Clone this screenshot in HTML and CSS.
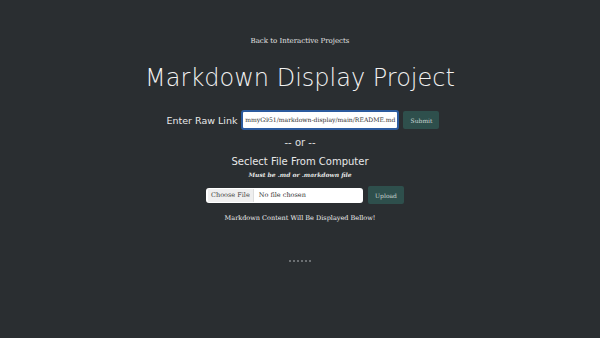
FILE: index.html
```html
<!DOCTYPE html>
<html lang="en">
<head>
<meta charset="utf-8">
<title>Markdown Display Project</title>
<link rel="stylesheet" href="styles.css">
</head>
<body>
<main class="page">
  <a class="back" href="#">Back to Interactive Projects</a>
  <h1 class="title">Markdown Display Project</h1>
  <form class="link-row">
    <label class="link-label" for="raw">Enter Raw Link</label>
    <div class="link-input"><span class="link-text">mmyG951/markdown-display/main/README.md</span></div>
    <button class="btn" type="button">Submit</button>
  </form>
  <p class="or">-- or --</p>
  <p class="select">Seclect File From Computer</p>
  <p class="hint">Must be .md or .markdown file</p>
  <div class="file-row">
    <div class="file-input"><span class="choose">Choose File</span><span class="none">No file chosen</span></div>
    <button class="btn btn-upload" type="button">Upload</button>
  </div>
  <p class="note">Markdown Content Will Be Displayed Bellow!</p>
  <div class="dots"><span></span><span></span><span></span><span></span><span></span><span></span></div>
</main>
</body>
</html>
```
FILE: styles.css
```css
html, body {
  margin: 0;
  padding: 0;
  background: #2a2e31;
  height: 100%;
}
.page {
  display: flex;
  flex-direction: column;
  align-items: center;
  padding-top: 36px;
  font-family: "DejaVu Serif", serif;
  color: #e6e6e6;
}
.back {
  color: #e4e4e4;
  text-decoration: none;
  font-size: 7px;
  line-height: 10px;
}
.title {
  margin: 16px 0 0;
  font-family: "DejaVu Sans", sans-serif;
  font-weight: 300;
  font-size: 24px;
  line-height: 32px;
  color: #f2f2f2;
  letter-spacing: 0;
}
.link-row {
  display: flex;
  align-items: center;
  margin: 16px 0 0 6px;
  gap: 4px;
}
.link-label {
  font-family: "DejaVu Sans", sans-serif;
  font-size: 9.5px;
  color: #e8e8e8;
}
.link-input {
  box-sizing: border-box;
  width: 158px;
  height: 20px;
  border: 2px solid #2b5a9e;
  border-radius: 3px;
  background: #fff;
  color: #333;
  font-size: 6.1px;
  line-height: 16px;
  padding: 0 2px;
  display: flex;
  justify-content: flex-end;
  overflow: hidden;
  white-space: nowrap;
}
.link-text {
  flex-shrink: 0;
}
.btn {
  box-sizing: border-box;
  height: 18px;
  width: 36px;
  border: none;
  border-radius: 2px;
  background: #2e4f4c;
  color: #c9d4d2;
  font-family: "DejaVu Serif", serif;
  font-size: 6px;
  padding: 0;
}
.or {
  margin: 6px 0 0;
  font-family: "DejaVu Sans", sans-serif;
  font-size: 10px;
  line-height: 14px;
  color: #e0e0e0;
}
.select {
  margin: 5px 0 0;
  font-family: "DejaVu Sans", sans-serif;
  font-size: 10px;
  line-height: 14px;
  color: #e8e8e8;
}
.hint {
  margin: 1px 0 0;
  font-size: 6px;
  line-height: 10px;
  font-style: italic;
  font-weight: bold;
  color: #e6e6e6;
}
.file-row {
  display: flex;
  align-items: center;
  gap: 5px;
  margin: 6px 0 0 10px;
}
.file-input {
  box-sizing: border-box;
  width: 157px;
  height: 15px;
  background: #fff;
  border-radius: 3px;
  display: flex;
  align-items: center;
  font-size: 6.5px;
  color: #333;
  padding-left: 2px;
}
.choose {
  background: #efefef;
  border-right: 1px solid #ddd;
  height: 13px;
  line-height: 13px;
  padding: 0 3px;
  margin-right: 5px;
  color: #444;
}
.btn-upload {
  height: 18px;
}
.note {
  margin: 9px 0 0;
  font-size: 6.5px;
  line-height: 10px;
  color: #f0f0f0;
}
.dots {
  display: flex;
  gap: 2px;
  margin-top: 37px;
}
.dots span {
  width: 2px;
  height: 2px;
  background: #6b6f72;
}
```
